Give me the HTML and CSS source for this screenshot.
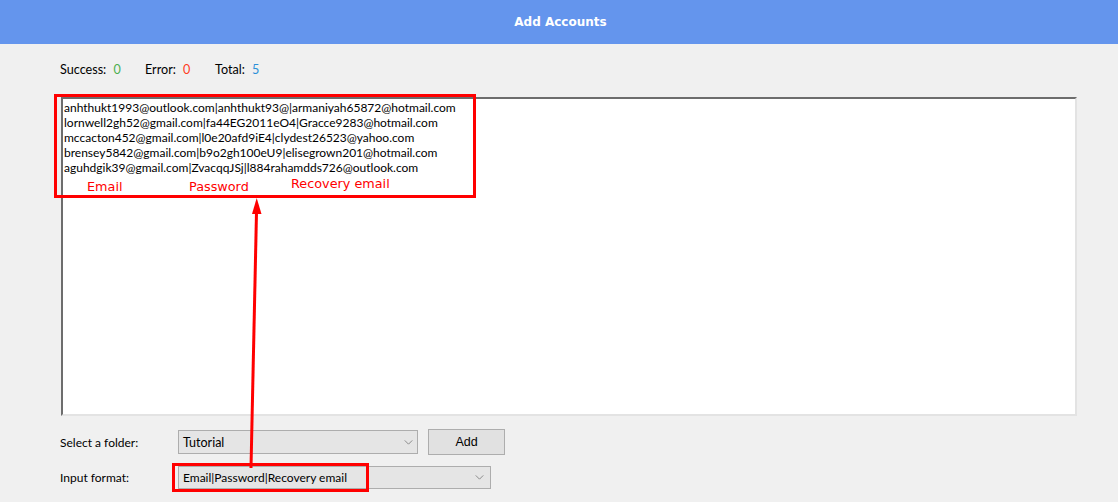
FILE: index.html
```
<!DOCTYPE html>
<html>
<head>
<meta charset="utf-8">
<link rel="stylesheet" href="styles.css">
</head>
<body>
<header class="titlebar">Add Accounts</header>
<main class="content">
  <div class="stats">
    <span class="stat stat-ok">Success: <b class="ok">0</b></span>
    <span class="stat stat-err">Error: <b class="err">0</b></span>
    <span class="stat">Total: <b class="tot">5</b></span>
  </div>
  <div class="editor">
    <div class="line">anhthukt1993@outlook.com|anhthukt93@|armaniyah65872@hotmail.com</div>
    <div class="line">lornwell2gh52@gmail.com|fa44EG2011eO4|Gracce9283@hotmail.com</div>
    <div class="line">mccacton452@gmail.com|l0e20afd9iE4|clydest26523@yahoo.com</div>
    <div class="line">brensey5842@gmail.com|b9o2gh100eU9|elisegrown201@hotmail.com</div>
    <div class="line">aguhdgik39@gmail.com|ZvacqqJSj|l884rahamdds726@outlook.com</div>
  </div>
  <div class="row row-folder">
    <span class="label">Select a folder:</span>
    <div class="select select-folder"><span>Tutorial</span><svg class="chev" viewBox="0 0 10 6"><path d="M0.5 0.5 L5 5 L9.5 0.5" fill="none" stroke="#7a7a7a" stroke-width="1"/></svg></div>
    <button class="btn">Add</button>
  </div>
  <div class="row row-format">
    <span class="label">Input format:</span>
    <div class="select select-format"><span>Email|Password|Recovery email</span><svg class="chev" viewBox="0 0 10 6"><path d="M0.5 0.5 L5 5 L9.5 0.5" fill="none" stroke="#7a7a7a" stroke-width="1"/></svg></div>
  </div>
</main>
<div class="annot box-data">
  <div class="tags">
    <span class="tag tag-email">Email</span>
    <span class="tag tag-pass">Password</span>
    <span class="tag tag-rec">Recovery email</span>
  </div>
</div>
<div class="annot box-format"></div>
<svg class="arrow" width="30" height="280" viewBox="0 0 30 280">
  <line x1="16.5" y1="14" x2="11" y2="270" stroke="#f00" stroke-width="3"/>
  <polygon points="16.7,0 12,16 21.5,16" fill="#f00"/>
</svg>
</body>
</html>
```
FILE: styles.css
```
html, body {
  margin: 0;
  padding: 0;
}
body {
  width: 1118px;
  height: 502px;
  background: #f0f0f0;
  font-family: Lato, "Noto Sans", sans-serif;
  font-size: 12px;
  color: #000;
  position: relative;
  overflow: hidden;
}
.titlebar {
  height: 44px;
  background: #6495ed;
  color: #fff;
  font-family: "DejaVu Sans", sans-serif;
  font-weight: bold;
  font-size: 12px;
  display: flex;
  align-items: center;
  justify-content: center;
  padding-left: 3px;
}
.content {
  padding-left: 60px;
  display: flex;
  flex-direction: column;
}
.stats {
  margin-top: 18px;
  height: 16px;
  line-height: 16px;
  display: flex;
  font-size: 12.6px;
}
.stat-ok { width: 85px; }
.stat-err { width: 70px; }
.stat b {
  font-weight: normal;
  margin-left: 4px;
}
.ok { color: #4caf50; }
.err { color: #ff3b1f; }
.tot { color: #2a8fd8; }
.editor {
  margin-top: 19px;
  margin-left: 1px;
  width: 1011px;
  height: 314px;
  padding-top: 1px;
  background: #fff;
  border-top: 2px solid #6d6d6d;
  border-left: 2px solid #6d6d6d;
  border-right: 2px solid #e3e3e3;
  border-bottom: 2px solid #e3e3e3;
  padding-left: 1px;
  line-height: 15px;
  font-size: 12px;
}
.row {
  display: flex;
  align-items: center;
}
.row-folder {
  margin-top: 13px;
  height: 26px;
}
.row-format {
  margin-top: 10px;
  height: 24px;
}
.label {
  width: 118px;
}
.select {
  box-sizing: border-box;
  background: #e5e5e5;
  border: 1px solid #adadad;
  display: flex;
  align-items: center;
  justify-content: space-between;
  padding: 0 4px 0 4px;
}
.select-folder {
  width: 240px;
  height: 24px;
  font-size: 12.5px;
}
.select-format {
  width: 313px;
  height: 23px;
  padding-right: 6px;
}
.chev {
  width: 9px;
  height: 5px;
}
.btn {
  margin-left: 10px;
  box-sizing: border-box;
  width: 77px;
  height: 26px;
  background: #e1e1e1;
  border: 1px solid #adadad;
  font-family: "Liberation Sans", sans-serif;
  font-size: 12.5px;
  color: #000;
  padding: 0;
}
.annot {
  position: absolute;
  box-sizing: border-box;
  border: 3px solid #f00;
}
.box-data {
  left: 54px;
  top: 94px;
  width: 422px;
  height: 104px;
}
.tags {
  position: absolute;
  left: 0;
  top: 82px;
  font-family: "DejaVu Sans", sans-serif;
  font-size: 12.8px;
  color: #f00;
}
.tag {
  position: absolute;
  white-space: nowrap;
  line-height: 14px;
}
.tag-email { left: 30px; top: 1px; }
.tag-pass { left: 132px; top: 1px; }
.tag-rec { left: 234px; top: -2px; }
.box-format {
  left: 172px;
  top: 463px;
  width: 197px;
  height: 29px;
}
.arrow {
  position: absolute;
  left: 240px;
  top: 198px;
}
```
